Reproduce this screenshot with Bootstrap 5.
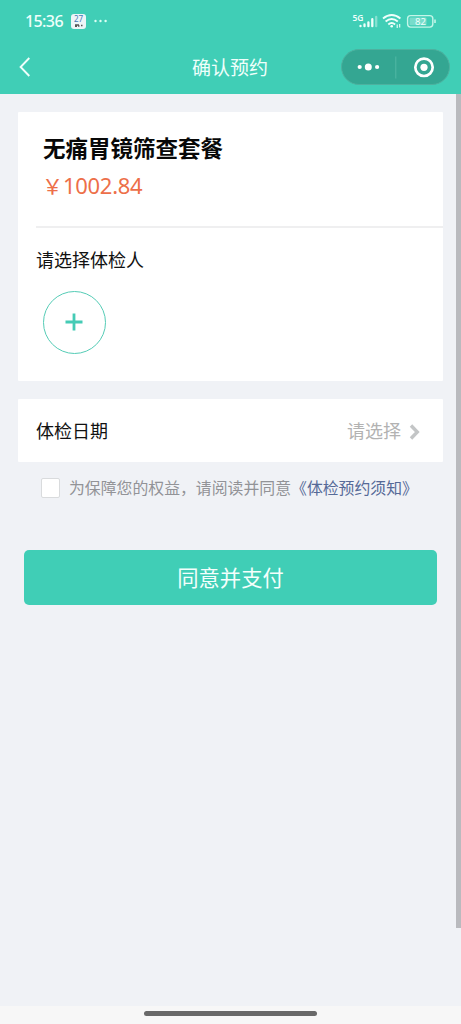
<!DOCTYPE html>
<html lang="zh-CN">
<head>
<meta charset="utf-8">
<meta name="viewport" content="width=device-width, initial-scale=1">
<title>确认预约</title>
<link href="https://cdn.jsdelivr.net/npm/bootstrap@5.3.0/dist/css/bootstrap.min.css" rel="stylesheet">
<style>
body{font-family:"Noto Sans CJK SC",sans-serif;background:#f0f2f6;height:1024px;overflow:hidden;color:#111}
svg{display:block;flex:none}
.top{background:#40ceb6;height:94px;color:#effffb}
.status{height:42px;padding:0 24px 0 25px}
.clock{font:500 16px/20px "Noto Sans",sans-serif;letter-spacing:-.6px;width:38px;white-space:nowrap}
.titlebar{height:52px;display:grid;grid-template-columns:1fr auto 1fr;padding:0 11px 3px 10px;align-items:center}
.back{margin-left:8px}
.page-title{font-size:19px;line-height:24px}
.capsule{width:109px;height:36px;border-radius:18px;background:#34a692;border:1px solid #4db19f}
.view{height:912px;padding:18px 18px 0}
.panel{background:#fff;border-radius:1px;border:0}
.pkg{height:269px;padding-left:18px}
.pkg-head{height:116px;border-bottom:2px solid #efeff0;padding:19px 0 0 7px}
.pkg-name{font-size:22.5px;line-height:32px;font-weight:700;color:#080808}
.price{color:#ed6f49;font-size:21px;line-height:30px;margin-top:7px;margin-left:-1px}
.price .num{font-family:"Noto Sans",sans-serif;font-size:22px;letter-spacing:-.3px}
.field{font-size:18px;line-height:26px}
.add{width:63px;height:63px;border:1.5px solid #55ccb6;margin:20px 0 0 6.5px}
.date{height:63px;margin-top:18px;padding:0 23px 2px 18px}
.hint{color:#b2b2b2}
.agree{height:51px;font-size:15.87px;line-height:24px;color:#929397;padding-left:23px;white-space:nowrap}
.tick.form-check-input{width:19px;height:20px;border:1px solid #d9dbdd;border-radius:2px;margin:0 9px 0 0;flex:none}
.agree a{color:#566a98}
.pay.btn{height:55px;background:#40ceb6;color:#f4fffc;border:0;border-radius:5px;font-size:21.3px;line-height:30px;margin:37px 6px 0;padding:0 0 1px}
.bottom{height:18px;background:#f7f7f7;padding-top:5px}
.bottom div{width:173px;height:5px;border-radius:3px;background:#696969}
.scroll{top:94px;right:0;width:5px;height:834px;background:#b9babe}
</style>
</head>
<body class="position-relative">
<header class="top">
  <div class="status d-flex align-items-center">
    <span class="clock">15:36</span>
    <svg class="ms-2" width="15" height="15" viewBox="0 0 15 15"><rect width="15" height="15" rx="3" fill="#edf5f8"/><text x="7.5" y="8.2" text-anchor="middle" font-family="Noto Sans" font-size="8" fill="#4778b5">27</text><path d="M4 11h4M4 12.4h2M7 12h1.5M10 11.5h1.5" stroke="#555" stroke-width="1.3"/></svg>
    <svg class="ms-2" width="14" height="4" viewBox="0 0 14 4" fill="#dcfff5"><circle cx="1.5" cy="2" r="1.2"/><circle cx="6.5" cy="2" r="1.2"/><circle cx="11.6" cy="2" r="1.2"/></svg>
    <svg class="ms-auto" width="85" height="18" viewBox="0 0 85 18">
      <text x="0.5" y="8.5" font-family="Noto Sans" font-size="8.5" font-weight="600" fill="#effffb" textLength="11" lengthAdjust="spacingAndGlyphs">5G</text>
      <g stroke="#effffb" stroke-width="2.3" stroke-linecap="round"><path d="M8.5 14v.2M12.5 12.5v1.7M16.4 10.3v3.9M20.3 7.2v7"/><path d="M24.2 5v9.2" opacity=".4"/></g>
      <g fill="none" stroke="#effffb" stroke-width="1.9"><path d="M31 6.500q8.700-7 17.400 0M33.600 9.600q6.100-5 12.200 0M36.300 12.500q3.400-2.800 6.800 0"/></g>
      <circle cx="39.700" cy="14.300" r="1.300" fill="#effffb"/>
      <path d="M45.200 12.500v3.500M47.700 12v3.500" stroke="#effffb" stroke-width="1.100"/>
      <rect x="55.600" y="3.600" width="25.200" height="11.500" rx="3" fill="none" stroke="#c4f6e9" stroke-width="1.400"/>
      <rect x="57.500" y="5.500" width="17" height="7.700" rx="1" fill="#78dccb"/>
      <path d="M83 7.500v3.500" stroke="#c4f6e9" stroke-width="1.600"/>
      <text x="68.500" y="12.900" text-anchor="middle" font-family="Noto Sans" font-size="9.500" fill="#effffb">82</text>
    </svg>
  </div>
  <div class="titlebar">
    <svg class="back" width="14" height="22" viewBox="0 0 14 22"><path d="M11.300 2L2.600 11l8.700 9" fill="none" stroke="#effffb" stroke-width="1.900"/></svg>
    <h1 class="page-title m-0 fw-normal">确认预约</h1>
    <div class="capsule ms-auto d-flex align-items-center">
      <svg width="107" height="34" viewBox="0 0 107 34"><g fill="#fff"><circle cx="17.700" cy="17" r="2.100"/><circle cx="26.300" cy="17" r="3.500"/><circle cx="35.100" cy="17" r="2.100"/><circle cx="82" cy="17.300" r="3.600"/></g><circle cx="82" cy="17.300" r="8.700" fill="none" stroke="#fff" stroke-width="2.700"/><path d="M53.800 6.500v22" stroke="#52b8a6"/></svg>
    </div>
  </div>
</header>
<main class="view d-flex flex-column">
  <section class="panel card pkg">
    <div class="pkg-head">
      <h2 class="pkg-name m-0">无痛胃镜筛查套餐</h2>
      <div class="price">￥<span class="num">1002.84</span></div>
    </div>
    <div class="field mt-3 pt-1 lh-sm">请选择体检人</div>
    <button class="add btn rounded-circle p-0 d-flex align-items-center justify-content-center" aria-label="添加"><svg width="18" height="18" viewBox="0 0 18 18"><path d="M9 .5v17M.5 9h17" stroke="#45cbb5" stroke-width="2.800"/></svg></button>
  </section>
  <section class="panel card date field flex-row align-items-center">
    <span class="me-auto">体检日期</span><span class="hint">请选择</span>
    <svg class="ms-2 mt-1" width="11" height="18" viewBox="0 0 11 18"><path d="M2 2.500l6.300 6.500L2 15.500" fill="none" stroke="#c3c5c6" stroke-width="3.400"/></svg>
  </section>
  <div class="agree d-flex align-items-center"><input class="form-check-input tick" type="checkbox" aria-label="同意"><span>为保障您的权益，请阅读并同意</span><a href="#" class="text-decoration-none">《体检预约须知》</a></div>
  <button class="pay btn">同意并支付</button>
</main>
<footer class="bottom"><div class="mx-auto"></div></footer>
<div class="scroll position-absolute"></div>
<script src="https://cdn.jsdelivr.net/npm/bootstrap@5.3.0/dist/js/bootstrap.bundle.min.js"></script>
</body>
</html>
